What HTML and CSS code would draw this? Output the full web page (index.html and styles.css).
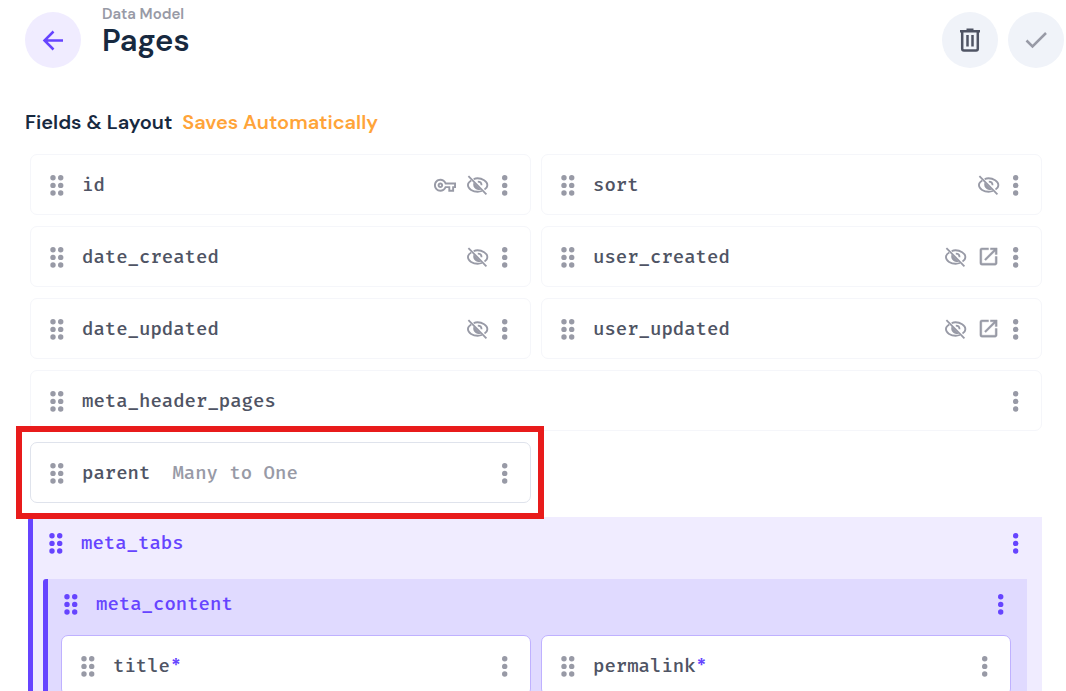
FILE: index.html
```html
<!DOCTYPE html>
<html lang="en">
<head>
<meta charset="utf-8">
<title>Pages – Data Model</title>
<link rel="stylesheet" href="styles.css">
</head>
<body>
<svg class="sprite" aria-hidden="true">
  <symbol id="grip" viewBox="0 0 14 22"><circle cx="3" cy="3.800" r="2.700"/><circle cx="10.700" cy="3.800" r="2.700"/><circle cx="3" cy="11.400" r="2.700"/><circle cx="10.700" cy="11.400" r="2.700"/><circle cx="3" cy="19" r="2.700"/><circle cx="10.700" cy="19" r="2.700"/></symbol>
  <symbol id="more" viewBox="0 0 12 22"><circle cx="5.700" cy="3.800" r="2.700"/><circle cx="5.700" cy="11.400" r="2.700"/><circle cx="5.700" cy="19" r="2.700"/></symbol>
  <symbol id="hidden" viewBox="0 0 24 24"><g fill="none" stroke="currentColor" stroke-width="1.900"><path d="M8 6.300C9.300 5.800 10.600 5.500 12 5.500c4.800 0 10.300 2.900 10.300 7.100 0 1.900-1.200 3.500-3 4.600M5.500 7.900C3.400 9.100 2 10.700 2 12.600c0 4.100 5.400 7 10.200 7 1.500 0 3-.3 4.300-.8"/><path d="M12.300 9c2.400 0 3.900 1.400 3.900 3.700"/><path d="M2.500 3.200l18.800 19"/></g><path d="M8 9.700l7.400 7.400c-4 2.600-9.500-2.400-7.400-7.400z"/></symbol>
  <symbol id="key" viewBox="0 0 24 24"><path transform="translate(1 1)" d="M21 18.500h-6v-3.800h-2.200c-1.100 2.300-3.500 3.800-6.100 3.800-3.700 0-6.700-3-6.700-6.700s3-6.700 6.700-6.700c2.600 0 5 1.500 6.100 3.800H23v5.800h-2v3.800zm-4-2h2v-3.800h2V11H11.400l-.2-.7C10.500 8.400 8.700 7.100 6.700 7.100 4.100 7.100 2 9.200 2 11.800s2.100 4.700 4.700 4.700c2 0 3.800-1.300 4.500-3.100l.2-.7H17v3.800zM6.700 14.700c-1.600 0-2.900-1.300-2.900-2.900s1.300-2.900 2.900-2.900 2.900 1.300 2.900 2.900-1.300 2.900-2.900 2.900zm0-3.800c-.5 0-.9.4-.9.900s.4.900.9.900.9-.4.9-.9-.4-.9-.9-.9z"/></symbol>
  <symbol id="open" viewBox="0 0 24 24"><path d="M19 19H5V5h7V3H5a2 2 0 0 0-2 2v14a2 2 0 0 0 2 2h14c1.100 0 2-.9 2-2v-7h-2v7zM14 3v2h3.590l-9.830 9.830 1.410 1.410L19 6.410V10h2V3h-7z" stroke="currentColor" stroke-width=".4"/></symbol>
</svg>

<header class="page-header">
  <button class="round back" aria-label="Back"><svg viewBox="0 0 24 24"><path d="M22 12.500H4M12.500 3.500l-9 9 9 9"/></svg></button>
  <div class="titles">
    <a class="crumb" href="#">Data Model</a>
    <h1>Pages</h1>
  </div>
  <div class="header-actions">
    <button class="round delete" aria-label="Delete"><svg viewBox="0 0 24 24"><path d="M2 3.200h20M8.500 1.700h7M4.200 3v17.800q0 1.700 1.700 1.700h12.200q1.700 0 1.700-1.700V3M9.500 7v11.500M14.500 7v11.500"/></svg></button>
    <button class="round save" aria-label="Save" disabled><svg viewBox="0 0 24 24"><path d="M2.500 12.500l6 6L22 5"/></svg></button>
  </div>
</header>

<main>
  <h2>Fields &amp; Layout <span class="note">Saves Automatically</span></h2>
  <div class="fields">
    <div class="field">
      <svg class="grip"><use href="#grip"/></svg><span class="name">id</span>
      <div class="tools"><svg class="icon"><use href="#key"/></svg><svg class="icon"><use href="#hidden"/></svg><button class="more" aria-label="Options for id"><svg><use href="#more"/></svg></button></div>
    </div>
    <div class="field">
      <svg class="grip"><use href="#grip"/></svg><span class="name">sort</span>
      <div class="tools"><svg class="icon"><use href="#hidden"/></svg><button class="more" aria-label="Options for sort"><svg><use href="#more"/></svg></button></div>
    </div>
    <div class="field">
      <svg class="grip"><use href="#grip"/></svg><span class="name">date_created</span>
      <div class="tools"><svg class="icon"><use href="#hidden"/></svg><button class="more" aria-label="Options for date_created"><svg><use href="#more"/></svg></button></div>
    </div>
    <div class="field">
      <svg class="grip"><use href="#grip"/></svg><span class="name">user_created</span>
      <div class="tools"><svg class="icon"><use href="#hidden"/></svg><svg class="icon"><use href="#open"/></svg><button class="more" aria-label="Options for user_created"><svg><use href="#more"/></svg></button></div>
    </div>
    <div class="field">
      <svg class="grip"><use href="#grip"/></svg><span class="name">date_updated</span>
      <div class="tools"><svg class="icon"><use href="#hidden"/></svg><button class="more" aria-label="Options for date_updated"><svg><use href="#more"/></svg></button></div>
    </div>
    <div class="field">
      <svg class="grip"><use href="#grip"/></svg><span class="name">user_updated</span>
      <div class="tools"><svg class="icon"><use href="#hidden"/></svg><svg class="icon"><use href="#open"/></svg><button class="more" aria-label="Options for user_updated"><svg><use href="#more"/></svg></button></div>
    </div>
    <div class="field full">
      <svg class="grip"><use href="#grip"/></svg><span class="name">meta_header_pages</span>
      <div class="tools"><button class="more" aria-label="Options for meta_header_pages"><svg><use href="#more"/></svg></button></div>
    </div>
    <div class="field active">
      <svg class="grip"><use href="#grip"/></svg><span class="name">parent</span><span class="type">Many to One</span>
      <div class="tools"><button class="more" aria-label="Options for parent"><svg><use href="#more"/></svg></button></div>
      <div class="highlight"></div>
    </div>
  </div>

  <section class="group">
    <div class="group-header">
      <svg class="grip"><use href="#grip"/></svg><span class="name">meta_tabs</span>
      <button class="more" aria-label="Options for meta_tabs"><svg><use href="#more"/></svg></button>
    </div>
    <section class="group nested">
      <div class="group-header">
        <svg class="grip"><use href="#grip"/></svg><span class="name">meta_content</span>
        <button class="more" aria-label="Options for meta_content"><svg><use href="#more"/></svg></button>
      </div>
      <div class="fields">
        <div class="field">
          <svg class="grip"><use href="#grip"/></svg><span class="name">title<span class="required">*</span></span>
          <div class="tools"><button class="more" aria-label="Options for title"><svg><use href="#more"/></svg></button></div>
        </div>
        <div class="field">
          <svg class="grip"><use href="#grip"/></svg><span class="name">permalink<span class="required">*</span></span>
          <div class="tools"><button class="more" aria-label="Options for permalink"><svg><use href="#more"/></svg></button></div>
        </div>
      </div>
    </section>
  </section>
</main>
</body>
</html>
```

FILE: styles.css
```css
* { box-sizing: border-box; }

html, body { height: 100%; }

body {
  margin: 0;
  overflow: hidden;
  background: #fff;
  color: #172940;
  font-family: "DM Sans", Inter, sans-serif;
}

.sprite { position: absolute; width: 0; height: 0; }

button {
  padding: 0;
  border: 0;
  background: none;
  color: inherit;
  cursor: pointer;
}

svg { display: block; fill: currentColor; flex: none; }

.page-header {
  display: flex;
  align-items: center;
  gap: 21px;
  padding: 4px 2px 0 25px;
}

.round {
  display: grid;
  place-items: center;
  width: 56px;
  height: 56px;
  border-radius: 50%;
  background: #f0f3f9;
}

.round svg {
  width: 24px;
  height: 24px;
  fill: none;
  stroke: currentColor;
  stroke-width: 2.5;
}

.page-header .round { margin-top: 8px; }
.back { background: #f0ecff; color: #6644ff; }
.delete { color: #4f5464; }
.save { color: #989aa6; }

.titles { align-self: flex-start; }

.crumb {
  display: block;
  color: #989aa6;
  font-size: 15px;
  font-weight: 600;
  line-height: 20px;
  text-decoration: none;
}

h1 {
  margin: 0;
  font-size: 31px;
  font-weight: 600;
  line-height: 34px;
}

.header-actions { display: flex; gap: 10px; margin-left: auto; }

main { padding: 40px 24px 0 30px; }

h2 {
  margin: 0 0 18px -5px;
  font-size: 20px;
  font-weight: 600;
  line-height: 28px;
}

.note { margin-left: 5px; color: #ffa439; }

.fields {
  display: grid;
  grid-template-columns: 1fr 1fr;
  gap: 11px 10px;
}

.field {
  position: relative;
  display: flex;
  align-items: center;
  height: 61px;
  padding: 0 19px;
  border: 1px solid #f5f6fa;
  border-radius: 7px;
  background: #fff;
  color: #4f5464;
}

.full { grid-column: 1 / -1; }
.active { border-color: #dfe3ec; }

.name, .type {
  font-family: "Fira Mono", "DejaVu Sans Mono", monospace;
  font-size: 19px;
  font-weight: 500;
  line-height: 28px;
}

.name { margin-left: 18px; }
.type { margin-left: 22px; color: #989aa6; }
.grip { width: 14px; height: 22px; color: #989aa6; }

.tools {
  display: flex;
  align-items: center;
  gap: 10px;
  margin-left: auto;
  color: #989aa6;
}

.icon { width: 23px; height: 23px; }
.more svg { width: 12px; height: 22px; }

.highlight {
  position: absolute;
  inset: -17px -14px -17px -15px;
  z-index: 1;
  border: 6px solid #e81b1b;
  pointer-events: none;
}

.group {
  margin: 14px 0 0 -2px;
  padding-right: 15px;
  border-left: 5px solid #6644ff;
  border-radius: 3px 0 0 3px;
  background: #f0ecff;
  color: #6644ff;
}

.group-header {
  display: flex;
  align-items: center;
  height: 62px;
  padding: 0 5px 10px 16px;
}

.group-header .grip { color: inherit; }
.group-header .more { margin-left: auto; }

.nested {
  margin: 0 0 0 10px;
  padding: 0 16px 16px 0;
  background: #e0daff;
}

.nested .group-header { height: 56px; padding: 0 4px 6px 16px; }
.nested .fields { padding-left: 13px; }
.nested .field { border-color: #bfb1ff; }

.required {
  margin-left: 1px;
  color: #6644ff;
  font-family: "DM Sans", Inter, sans-serif;
  font-weight: 700;
}
```
